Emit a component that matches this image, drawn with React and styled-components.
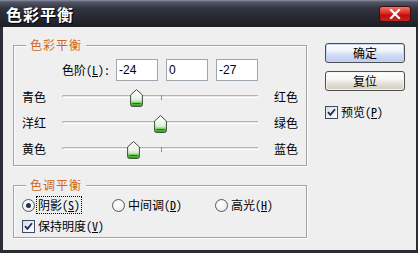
import React from 'react';
import styled, { createGlobalStyle } from 'styled-components';

const Global = createGlobalStyle`
  html, body {
    margin: 0;
    padding: 0;
    background: #2a2c36;
  }
  body {
    font-family: "Noto Sans Mono CJK SC", "Noto Sans CJK SC", sans-serif;
    font-size: 12px;
    color: #000;
  }
`;

const Window = styled.div`
  width: 418px;
  height: 253px;
  display: flex;
  flex-direction: column;
  background: #2a2c36;
  overflow: hidden;
`;

const TitleBar = styled.div`
  height: 27px;
  flex: none;
  display: flex;
  align-items: center;
  justify-content: space-between;
  padding: 0 7px 0 6px;
  background: linear-gradient(#8c90a0 0, #535666 2px, #30323e 9px, #1d1e26 100%);
`;

const Title = styled.div`
  color: #fff;
  font-family: "Noto Sans CJK SC", sans-serif;
  font-weight: bold;
  font-size: 16px;
  line-height: 18px;
  letter-spacing: 1px;
  text-shadow: 1px 1px 0 #000;
`;

const CloseButton = styled.div`
  width: 32px;
  height: 16px;
  box-sizing: border-box;
  border: 1px solid #3c0b0b;
  border-radius: 3px;
  background: linear-gradient(#f07868 0, #dc2a22 45%, #b80f0a 60%, #c8261e 100%);
  display: flex;
  align-items: center;
  justify-content: center;
`;

const Frame = styled.div`
  flex: 1;
  margin: 0 2px 3px 3px;
  background: #efefef;
  display: flex;
  align-items: flex-start;
  padding: 16px 0 0 10px;
  gap: 18px;
`;

const LeftColumn = styled.div`
  width: 294px;
  padding-top: 2px;
  display: flex;
  flex-direction: column;
  gap: 19px;
`;

const GroupBox = styled.div`
  position: relative;
  box-sizing: border-box;
  height: ${p => p.$height}px;
  border: 1px solid #a3a3a6;
  box-shadow: inset 1px 1px 0 #fff, 1px 1px 0 #fff;
  padding: ${p => p.$padding};
  display: flex;
  flex-direction: column;
`;

const Legend = styled.div`
  position: absolute;
  top: -8px;
  left: 12px;
  padding: 0 4px;
  background: #efefef;
  color: #d0671c;
  line-height: 14px;
  letter-spacing: 1px;
`;

const LevelsRow = styled.div`
  display: flex;
  align-items: center;
  padding-left: 48px;
  height: 22px;
  margin-bottom: 3px;
`;

const LevelsLabel = styled.span`
  width: 54px;
  line-height: 14px;
`;

const NumberBox = styled.div`
  width: 42px;
  height: 22px;
  box-sizing: border-box;
  border: 1px solid #9ea6b0;
  background: #fff;
  margin-right: 8px;
  padding-left: 2px;
  display: flex;
  align-items: center;
  font-family: "Liberation Sans", sans-serif;
  font-size: 12px;
`;

const SliderRow = styled.div`
  display: grid;
  grid-template-columns: 24px 1fr 24px;
  align-items: center;
  height: 26px;
  padding: 0 8px;
  line-height: 14px;
`;

const SliderArea = styled.div`
  position: relative;
  height: 26px;
  margin: 0 15px 0 16px;
`;

const Track = styled.div`
  position: absolute;
  left: 0;
  right: 0;
  top: 11px;
  height: 3px;
  box-sizing: border-box;
  border: 1px solid #b4b4b4;
  border-bottom-color: #fff;
  border-right-color: #fff;
  border-radius: 2px;
  background: #e6e6e6;
`;

const Tick = styled.div`
  position: absolute;
  left: 50%;
  top: 11px;
  width: 1px;
  height: 5px;
  background: #8e8e8e;
`;

const ThumbWrap = styled.div`
  position: absolute;
  top: 5px;
  width: 13px;
  height: 18px;
  margin-left: -7px;
`;

const OptionsRow = styled.div`
  display: grid;
  grid-template-columns: 90px 103px auto;
  height: 16px;
  align-items: center;
  margin-bottom: 5px;
`;

const Option = styled.label`
  display: flex;
  align-items: center;
  gap: 2px;
  line-height: 14px;
`;

const OptionText = styled.span`
  padding: 1px 1px;
  outline: ${p => (p.$focused ? '1px dotted #000' : 'none')};
  outline-offset: 0;
`;

const Radio = styled.span`
  width: 13px;
  height: 13px;
  box-sizing: border-box;
  border-radius: 50%;
  border: 1px solid #4d5a6a;
  background: radial-gradient(circle at 40% 35%, #fff 0, #f2f2f2 55%, #d8dce2 100%);
  display: flex;
  align-items: center;
  justify-content: center;
  flex: none;

  &::after {
    content: '';
    width: 5px;
    height: 5px;
    border-radius: 50%;
    background: ${p => (p.$checked ? '#2a3344' : 'transparent')};
  }
`;

const Box = styled.span`
  width: 13px;
  height: 13px;
  box-sizing: border-box;
  border: 1px solid #3a4a63;
  background: linear-gradient(135deg, #dcdcdc, #fff);
  flex: none;
  display: flex;
  align-items: center;
  justify-content: center;
`;

const RightColumn = styled.div`
  width: 80px;
  display: flex;
  flex-direction: column;
  gap: 8px;
`;

const Button = styled.div`
  height: 20px;
  box-sizing: border-box;
  border: 1px solid #4e4e4e;
  border-radius: 3px;
  display: flex;
  align-items: center;
  justify-content: center;
  line-height: 14px;
  background: ${p =>
    p.$default
      ? 'linear-gradient(#ffffff 0, #eef2fc 40%, #d2ddf5 60%, #bccbf0 100%)'
      : 'linear-gradient(#ffffff 0, #f6f5f1 40%, #e4e0d6 65%, #d3cdbf 100%)'};
  box-shadow: ${p => (p.$default ? 'inset 0 0 0 1px #c7d5f3' : 'inset 0 0 0 1px #f6f4ef')};
`;

const PreviewRow = styled(Option)`
  margin-top: 5px;
`;

const U = styled.span`
  text-decoration: underline;
  text-underline-offset: 1px;
`;

function Check() {
  return (
    <Box>
      <svg width="9" height="9" viewBox="0 0 9 9">
        <path d="M1 4.2 L3.4 6.8 L8 1.2" fill="none" stroke="#1e2c58" strokeWidth="1.8" />
      </svg>
    </Box>
  );
}

function Thumb({ value, id }) {
  const pct = ((value + 100) / 200) * 100;
  return (
    <ThumbWrap style={{ left: `${pct}%` }}>
      <svg width="13" height="18" viewBox="0 0 13 18">
        <defs>
          <linearGradient id={id} x1="0" y1="0" x2="0" y2="1">
            <stop offset="0" stopColor="#ffffff" />
            <stop offset="0.5" stopColor="#f0f2f0" />
            <stop offset="0.66" stopColor="#cdeec4" />
            <stop offset="0.82" stopColor="#5cc842" />
            <stop offset="1" stopColor="#2f9a22" />
          </linearGradient>
        </defs>
        <path
          d="M6.5 0.6 L12.4 6 L12.4 15.6 Q12.4 17.4 10.6 17.4 L2.4 17.4 Q0.6 17.4 0.6 15.6 L0.6 6 Z"
          fill={`url(#${id})`}
          stroke="#3f4a3f"
          strokeWidth="1"
        />
        <path d="M2.5 14.5 H10.5" stroke="#2f6a26" strokeWidth="1" />
      </svg>
    </ThumbWrap>
  );
}

const sliders = [
  { left: '青色', right: '红色', value: -24 },
  { left: '洋红', right: '绿色', value: 0 },
  { left: '黄色', right: '蓝色', value: -27 },
];

export default function App() {
  return (
    <>
      <Global />
      <Window>
        <TitleBar>
          <Title>色彩平衡</Title>
          <CloseButton>
            <svg width="12" height="10" viewBox="0 0 12 10">
              <path d="M2 1 L10 9 M10 1 L2 9" stroke="#fff" strokeWidth="2.2" strokeLinecap="square" />
            </svg>
          </CloseButton>
        </TitleBar>
        <Frame>
          <LeftColumn>
            <GroupBox $height={121} $padding="13px 0 0 0">
              <Legend>色彩平衡</Legend>
              <LevelsRow>
                <LevelsLabel>
                  色阶(<U>L</U>):
                </LevelsLabel>
                <NumberBox>-24</NumberBox>
                <NumberBox>0</NumberBox>
                <NumberBox>-27</NumberBox>
              </LevelsRow>
              {sliders.map((s, i) => (
                <SliderRow key={s.left}>
                  <span>{s.left}</span>
                  <SliderArea>
                    <Track />
                    <Tick />
                    <Thumb value={s.value} id={`thumb${i}`} />
                  </SliderArea>
                  <span>{s.right}</span>
                </SliderRow>
              ))}
            </GroupBox>
            <GroupBox $height={53} $padding="11px 0 0 8px">
              <Legend>色调平衡</Legend>
              <OptionsRow>
                <Option>
                  <Radio $checked />
                  <OptionText $focused>
                    阴影(<U>S</U>)
                  </OptionText>
                </Option>
                <Option>
                  <Radio />
                  <OptionText>
                    中间调(<U>D</U>)
                  </OptionText>
                </Option>
                <Option>
                  <Radio />
                  <OptionText>
                    高光(<U>H</U>)
                  </OptionText>
                </Option>
              </OptionsRow>
              <Option>
                <Check />
                <OptionText>
                  保持明度(<U>V</U>)
                </OptionText>
              </Option>
            </GroupBox>
          </LeftColumn>
          <RightColumn>
            <Button $default>确定</Button>
            <Button>复位</Button>
            <PreviewRow>
              <Check />
              <OptionText>
                预览(<U>P</U>)
              </OptionText>
            </PreviewRow>
          </RightColumn>
        </Frame>
      </Window>
    </>
  );
}
